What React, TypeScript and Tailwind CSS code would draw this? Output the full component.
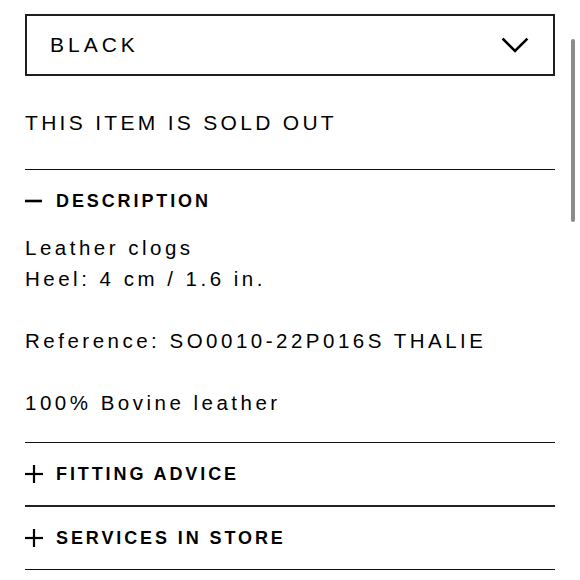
import React from 'react'

function Chevron() {
  return (
    <svg width="28" height="16" viewBox="0 0 28 16" fill="none">
      <polyline
        points="2.5,2.5 14,14 25.5,2.5"
        stroke="#000"
        strokeWidth="2.6"
        strokeLinecap="square"
        strokeLinejoin="miter"
      />
    </svg>
  )
}

function SignIcon({ open }: { open: boolean }) {
  return (
    <svg width="18" height="18" viewBox="0 0 18 18" fill="none">
      <line x1="0" y1="9" x2={open ? 17 : 18} y2="9" stroke="#000" strokeWidth={open ? 2.6 : 2.2} />
      {!open && <line x1="9" y1="0" x2="9" y2="18" stroke="#000" strokeWidth="2.2" />}
    </svg>
  )
}

function SectionHeader({ label, open }: { label: string; open: boolean }) {
  return (
    <div className="h-[62px] flex items-center gap-[13px]">
      <SignIcon open={open} />
      <span className="text-[18px] font-bold tracking-[2.9px] text-black">{label}</span>
    </div>
  )
}

export default function App() {
  return (
    <div
      className="relative min-h-[580px] bg-white px-[25px] pt-[14px] text-black"
      style={{ fontFamily: '"Liberation Sans", Arial, sans-serif' }}
    >
      {/* Colour select */}
      <div className="h-[62px] border-2 border-[#1f1f1f] flex items-center justify-between pl-[23px] pr-[24px]">
        <span className="text-[21px] tracking-[4px]">BLACK</span>
        <Chevron />
      </div>

      <p className="mt-[31px] text-[21px] leading-[31px] tracking-[3.3px]">THIS ITEM IS SOLD OUT</p>

      <div className="mt-[31px] border-t border-[#111]">
        <SectionHeader label="DESCRIPTION" open />
        <div className="pb-[24px] text-[20.5px] leading-[31px] tracking-[3.5px]">
          <p>Leather clogs</p>
          <p>Heel: 4 cm / 1.6 in.</p>
          <p className="h-[31px]"></p>
          <p>Reference: SO0010-22P016S THALIE</p>
          <p className="h-[31px]"></p>
          <p>100% Bovine leather</p>
        </div>
      </div>

      <div className="border-t border-[#111]">
        <SectionHeader label="FITTING ADVICE" open={false} />
      </div>
      <div className="border-t-2 border-[#222]">
        <SectionHeader label="SERVICES IN STORE" open={false} />
      </div>
      <div className="border-t border-[#111]" />

      {/* overlay scrollbar */}
      <div className="absolute right-[5px] top-[39px] w-[4px] h-[183px] rounded-full bg-[#8c8c8c]" />
    </div>
  )
}
